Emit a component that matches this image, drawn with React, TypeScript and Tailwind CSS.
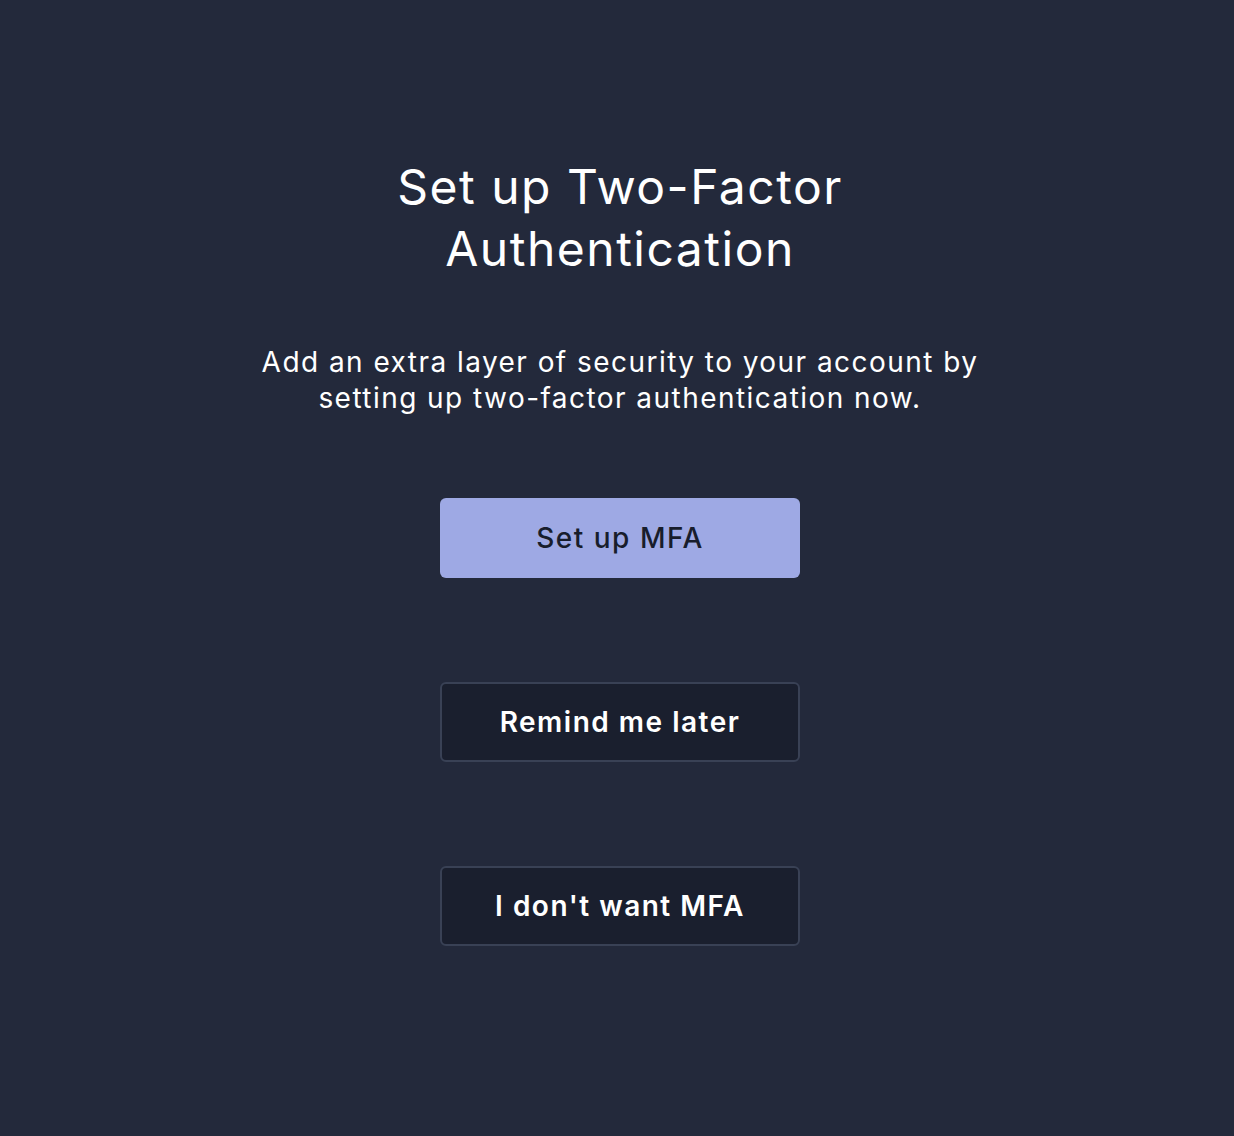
import React from 'react'

const App: React.FC = () => {
  return (
    <div className="min-h-[1136px] w-full bg-[#23293b] pl-[6px] font-['Inter','Noto_Sans',sans-serif] text-white">
      <div className="mx-auto flex w-[760px] flex-col items-center pt-[156px] text-center">
        <h1 className="w-[480px] text-[48px] font-normal leading-[62px] tracking-[1.5px]">
          Set up Two-Factor Authentication
        </h1>
        <p className="mt-[64px] w-[740px] text-[28px] leading-[36px] tracking-[1.45px] text-white">
          Add an extra layer of security to your account by setting up two-factor authentication now.
        </p>
        <div className="mt-[82px] flex flex-col gap-[104px]">
          <button
            type="button"
            className="h-[80px] w-[360px] rounded-md bg-[#9ea9e4] text-[28px] font-medium tracking-[1.5px] text-[#181d2c]"
          >
            Set up MFA
          </button>
          <button
            type="button"
            className="h-[80px] w-[360px] rounded-md border-2 border-[#394155] bg-[#1a1f2e] text-[28px] font-semibold tracking-[1.5px] text-white"
          >
            Remind me later
          </button>
          <button
            type="button"
            className="h-[80px] w-[360px] rounded-md border-2 border-[#394155] bg-[#1a1f2e] text-[28px] font-semibold tracking-[1.5px] text-white"
          >
            I don't want MFA
          </button>
        </div>
      </div>
    </div>
  )
}

export default App
